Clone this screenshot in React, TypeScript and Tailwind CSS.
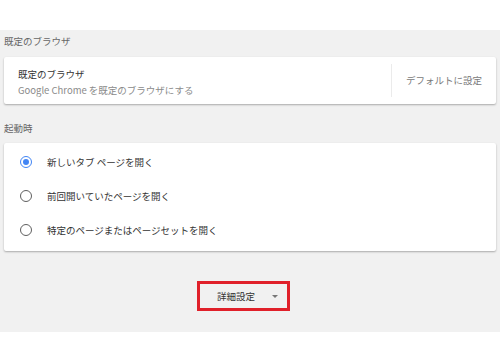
const font = { fontFamily: '"Noto Sans CJK JP", "Noto Sans", sans-serif' }

const options = [
  '新しいタブ ページを開く',
  '前回開いていたページを開く',
  '特定のページまたはページセットを開く',
]

function Radio({ checked }: { checked: boolean }) {
  return checked ? (
    <span className="flex h-[12px] w-[12px] items-center justify-center rounded-full border-[1.5px] border-[#4285f4]">
      <span className="h-[6px] w-[6px] rounded-full bg-[#4285f4]" />
    </span>
  ) : (
    <span className="h-[12px] w-[12px] rounded-full border-[1.5px] border-[#5f5f5f]" />
  )
}

export default function App() {
  const selected = 0

  return (
    <div className="h-[362px] w-[500px] bg-white" style={font}>
      <div className="h-[30px]" />
      <div className="flex h-[302px] flex-col bg-[#f1f1f1] px-[4px]">
        <div className="h-[27px] pt-[4px] text-[9.5px] leading-[14px] text-[#666]">既定のブラウザ</div>
        <div className="flex h-[47px] items-center rounded-[2px] bg-white shadow-[0_1px_2px_rgba(0,0,0,0.3)]">
          <div className="flex flex-1 flex-col pl-[14px] pt-[2px]">
            <div className="text-[9.5px] leading-[14px] text-[#333]">既定のブラウザ</div>
            <div className="mt-[2px] text-[9.5px] leading-[14px] text-[#8a8a8a]">Google Chrome を既定のブラウザにする</div>
          </div>
          <div className="h-[33px] w-px bg-[#ebebeb]" />
          <div className="w-[104px] pl-[14px] text-[9.5px] text-[#7a7a7a]">デフォルトに設定</div>
        </div>
        <div className="flex h-[39px] items-end pb-[8px] text-[9.5px] text-[#666]">起動時</div>
        <div className="flex flex-col rounded-[2px] bg-white pb-[4px] pt-[2px] shadow-[0_1px_2px_rgba(0,0,0,0.3)]">
          {options.map((label, i) => (
            <div key={label} className="flex h-[34px] items-center">
              <div className="flex w-[43px] justify-center pl-[1px]">
                <Radio checked={i === selected} />
              </div>
              <span className="text-[9.5px] text-[#333]">{label}</span>
            </div>
          ))}
        </div>
        <div className="flex justify-center pr-[13px] pt-[30px]">
          <button className="flex h-[30px] w-[93px] items-center border-[3px] border-[#e0202a] pl-[17px] text-[9.5px] text-[#333]">
            <span>詳細設定</span>
            <span className="ml-[17px] h-0 w-0 border-x-[3px] border-t-[3px] border-x-transparent border-t-[#777]" />
          </button>
        </div>
      </div>
    </div>
  )
}
